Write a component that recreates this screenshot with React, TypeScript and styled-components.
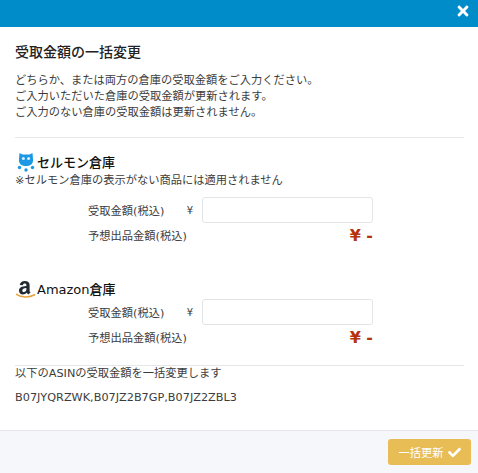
import React from 'react';
import styled, { createGlobalStyle } from 'styled-components';
import { FaCheck, FaTimes } from 'react-icons/fa';

const GlobalStyle = createGlobalStyle`
	html, body {
		margin: 0;
		padding: 0;
		background: #fff;
	}
	body {
		font-family: 'DejaVu Sans', 'Noto Sans CJK JP', sans-serif;
		font-size: 11.25px;
		color: #3c3c3c;
	}
`;

const OwlLogo = () => (
	<svg width="20" height="22" viewBox="0 0 20 22">
		<path
			d="M3.5 3 L6.5 4.6 H13.5 L16.5 3 L17 9 C17.4 13.4 15 16 10 16 C5 16 2.6 13.4 3 9 Z"
			fill="#1c98e4"
		/>
		<circle cx="7.4" cy="8.6" r="1.5" fill="#d8f0fc" />
		<circle cx="12.6" cy="8.6" r="1.5" fill="#d8f0fc" />
		<circle cx="3.5" cy="17.5" r="1.7" fill="#1c98e4" />
		<circle cx="10" cy="20" r="1.7" fill="#1c98e4" />
		<circle cx="16.5" cy="17.5" r="1.7" fill="#1c98e4" />
	</svg>
);

const AmazonLogo = () => (
	<svg width="20" height="22" viewBox="0 0 20 22">
		<path
			transform="translate(-0.8 2.5)"
			d="M4.5 5.5 C5 2.6 7 1.4 9.6 1.4 C12.6 1.4 14.4 2.8 14.4 5.4 V11 C14.4 12 14.8 12.5 15.4 13.1 L13 15 C12.3 14.4 11.9 13.9 11.5 13.3 C10.4 14.5 9.3 15 7.7 15 C5.4 15 3.8 13.6 3.8 11.1 C3.8 8 6.4 6.8 11.2 6.4 V5.6 C11.2 4.6 10.6 4 9.5 4 C8.5 4 7.8 4.6 7.6 5.8 Z M11.2 8.5 C8.6 8.7 7.1 9.3 7.1 10.9 C7.1 12 7.7 12.6 8.6 12.6 C10.2 12.6 11.2 11.4 11.2 9.6 Z"
			fill="#222b33"
			fillRule="evenodd"
		/>
		<path
			d="M0.5 17.4 C5 20.6 13.5 20.8 18.6 17.8"
			fill="none"
			stroke="#e8a33d"
			strokeWidth="1.6"
			strokeLinecap="round"
		/>
	</svg>
);

const warehouses = [
	{ name: 'セルモン倉庫', note: '※セルモン倉庫の表示がない商品には適用されません', logo: <OwlLogo /> },
	{ name: 'Amazon倉庫', logo: <AmazonLogo /> },
];

const App: React.FC = () => {
	return (
		<Modal>
			<GlobalStyle />
			<TopBar>
				<CloseButton>
					<FaTimes />
				</CloseButton>
			</TopBar>
			<Body>
				<Title>受取金額の一括変更</Title>
				<Lead>
					どちらか、または両方の倉庫の受取金額をご入力ください。
					<br />
					ご入力いただいた倉庫の受取金額が更新されます。
					<br />
					ご入力のない倉庫の受取金額は更新されません。
				</Lead>
				<Divider />
				{warehouses.map((warehouse) => (
					<Section key={warehouse.name} $hasNote={!!warehouse.note}>
						<SectionHead>
							<LogoBox>{warehouse.logo}</LogoBox>
							<SectionName>{warehouse.name}</SectionName>
						</SectionHead>
						{warehouse.note && <Note>{warehouse.note}</Note>}
						<Row>
							<RowLabel>受取金額(税込)</RowLabel>
							<Yen>¥</Yen>
							<AmountInput type="text" />
						</Row>
						<EstimateRow>
							<RowLabel>予想出品金額(税込)</RowLabel>
							<Price>¥ -</Price>
						</EstimateRow>
					</Section>
				))}
				<Divider />
				<AsinLabel>以下のASINの受取金額を一括変更します</AsinLabel>
				<AsinList>B07JYQRZWK,B07JZ2B7GP,B07JZ2ZBL3</AsinList>
			</Body>
			<Footer>
				<SubmitButton>
					一括更新 <FaCheck />
				</SubmitButton>
			</Footer>
		</Modal>
	);
};

export default App;

const Modal = styled.div`
	width: 478px;
	height: 473px;
	display: flex;
	flex-direction: column;
	overflow: hidden;
`;

const TopBar = styled.div`
	height: 27px;
	background: #008cc9;
	display: flex;
	justify-content: flex-end;
	align-items: center;
	padding-right: 7px;
`;

const CloseButton = styled.div`
	color: #fff;
	font-size: 16px;
	display: flex;
	margin-top: -6px;
`;

const Body = styled.div`
	flex: 1;
	padding: 15px 0 0 15px;
`;

const Title = styled.div`
	font-size: 14px;
	font-weight: 500;
	line-height: 20px;
	color: #222;
`;

const Lead = styled.div`
	margin-top: 11px;
	line-height: 16px;
	width: 420px;
`;

const Divider = styled.div`
	height: 1px;
	background: #e4e6e8;
	margin-top: 16px;
	width: 449px;
`;

const Section = styled.div<{ $hasNote: boolean }>`
	margin-top: ${(p) => (p.$hasNote ? '12px' : '32px')};

	& + ${Divider} {
		margin-top: 18px;
	}
`;

const SectionHead = styled.div`
	display: flex;
	align-items: center;
	height: 22px;
`;

const LogoBox = styled.div`
	width: 21px;
	display: flex;
	margin-left: 1px;
`;

const SectionName = styled.div`
	font-size: 13px;
	font-weight: 500;
	color: #111;
`;

const Note = styled.div`
	line-height: 16px;
	margin: 1px 0 8px;
`;

const Row = styled.div`
	display: flex;
	align-items: center;
	height: 26px;
	padding-left: 73px;
`;

const RowLabel = styled.div`
	flex: 1;
`;

const Yen = styled.div`
	font-size: 10px;
	margin-right: 9px;
`;

const AmountInput = styled.input`
	box-sizing: border-box;
	width: 171px;
	height: 26px;
	margin: 0 105px 0 0;
	padding: 0 6px;
	border: 1px solid #e2e5e8;
	border-radius: 3px;
	background: #fff;
	outline: 0;
`;

const EstimateRow = styled.div`
	display: flex;
	align-items: center;
	height: 20px;
	margin-top: 2px;
	padding: 0 105px 0 73px;
`;

const Price = styled.div`
	font-size: 16px;
	font-weight: 700;
	color: #b5340c;
`;

const AsinLabel = styled.div`
	line-height: 16px;
`;

const AsinList = styled.div`
	margin-top: 8px;
	line-height: 16px;
`;

const Footer = styled.div`
	height: 43px;
	box-sizing: border-box;
	border-top: 1px solid #e6e8ea;
	background: #f5f7fa;
	display: flex;
	justify-content: flex-end;
	padding: 8px 7px 0 0;
`;

const SubmitButton = styled.button`
	width: 83px;
	height: 26px;
	padding: 0;
	border: 0;
	border-radius: 3px;
	background: #e8bd55;
	color: #fff;
	font-family: inherit;
	font-size: 11.25px;
	display: flex;
	align-items: center;
	justify-content: center;
	gap: 4px;

	svg {
		font-size: 13px;
	}
`;
